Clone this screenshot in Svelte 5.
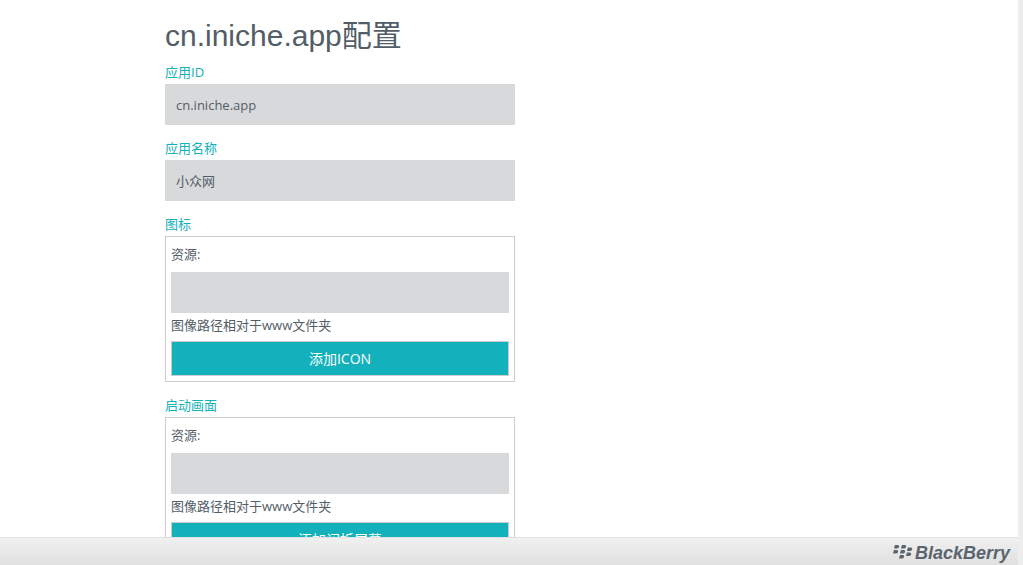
<script>
  let appId = $state('cn.iniche.app');
  let appName = $state('小众网');
  const assets = [
    { id: 'icon', title: '图标', action: '添加ICON' },
    { id: 'splash', title: '启动画面', action: '添加闪拆屏幕' }
  ];
</script>

<div class="shell">
  <div class="page">
    <main>
      <form onsubmit={(e) => e.preventDefault()}>
        <h1>cn.iniche.app配置</h1>

        <div class="field">
          <label for="app-id">应用ID</label>
          <input id="app-id" type="text" bind:value={appId} />
        </div>

        <div class="field">
          <label for="app-name">应用名称</label>
          <input id="app-name" type="text" bind:value={appName} />
        </div>

        {#each assets as asset (asset.id)}
          <section class="field">
            <h2>{asset.title}</h2>
            <div class="box">
              <label for={asset.id}>资源:</label>
              <input id={asset.id} type="text" aria-describedby="{asset.id}-hint" />
              <p id="{asset.id}-hint">图像路径相对于www文件夹</p>
              <button type="button">{asset.action}</button>
            </div>
          </section>
        {/each}
      </form>
    </main>

    <footer>
      <svg class="mark" viewBox="0 0 20 16" aria-hidden="true">
        <g fill="currentColor">
          <path d="M1.900 1h3q1.500 0 1.200 1.700T4.200 4.400H1z" />
          <path d="M8.900 1h3q1.500 0 1.200 1.700T11.200 4.400H8z" />
          <path d="M.9 6h3q1.500 0 1.200 1.700T3.200 9.400H0z" />
          <path d="M7.900 6h3q1.500 0 1.200 1.700T10.200 9.400H7z" />
          <path d="M14.900 3.500h3q1.500 0 1.200 1.700T17.200 6.900H14z" />
          <path d="M6.900 11h3q1.500 0 1.200 1.700T9.200 14.400H6z" />
          <path d="M13.900 8.500h3q1.500 0 1.200 1.700T16.200 11.900H13z" />
        </g>
      </svg>
      <span class="brand">BlackBerry</span>
    </footer>
  </div>
  <div class="track"></div>
</div>

<style>
  :global(body) {
    margin: 0;
    background: #fff;
  }

  .shell {
    display: flex;
    height: 100vh;
    overflow: hidden;
    color: #535d67;
    font: 13px/16px "Open Sans", "Noto Sans CJK SC", sans-serif;
  }

  .page {
    flex: 1;
    min-width: 0;
    display: flex;
    flex-direction: column;
  }

  .track {
    flex: 0 0 5px;
    background: #ededed;
  }

  main {
    flex: 1;
    min-height: 0;
    overflow: hidden;
    padding: 16px 16px 0;
  }

  form {
    width: 100%;
    max-width: 688px;
    margin: 0 auto;
  }

  h1 {
    margin: 0 0 8px;
    font: 400 30px/40px "Liberation Sans", "Noto Sans CJK SC", sans-serif;
  }

  h2 {
    margin: 0;
    font: inherit;
  }

  .field {
    max-width: 350px;
    margin-bottom: 15px;
  }

  .field > label,
  h2 {
    display: block;
    padding-bottom: 4px;
    color: #12b1bc;
  }

  input {
    display: block;
    box-sizing: border-box;
    width: 100%;
    height: 41px;
    padding: 0 11px;
    border: 0;
    border-radius: 0;
    background: #d8d9db;
    color: inherit;
    font: inherit;
  }

  .box {
    padding: 5px;
    border: 1px solid #ccc;
  }

  .box label {
    display: block;
    padding: 4px 0 10px;
  }

  p {
    margin: 4px 0 8px;
  }

  button {
    display: block;
    width: 100%;
    height: 35px;
    padding: 0;
    border: 1px solid #ccc;
    border-radius: 0;
    background: #12b1bc;
    color: #fff;
    font: inherit;
    font-size: 14px;
  }

  footer {
    display: flex;
    align-items: center;
    justify-content: flex-end;
    gap: 2px;
    box-sizing: border-box;
    height: 28px;
    padding-right: 8px;
    border-top: 1px solid #e2e2e2;
    background: linear-gradient(#f0f0f0, #e0e0e0);
    color: #5b656e;
  }

  .mark {
    width: 20px;
    height: 20px;
  }

  .brand {
    padding-top: 2px;
    font: italic 700 18px/24px "Liberation Sans", sans-serif;
  }
</style>
